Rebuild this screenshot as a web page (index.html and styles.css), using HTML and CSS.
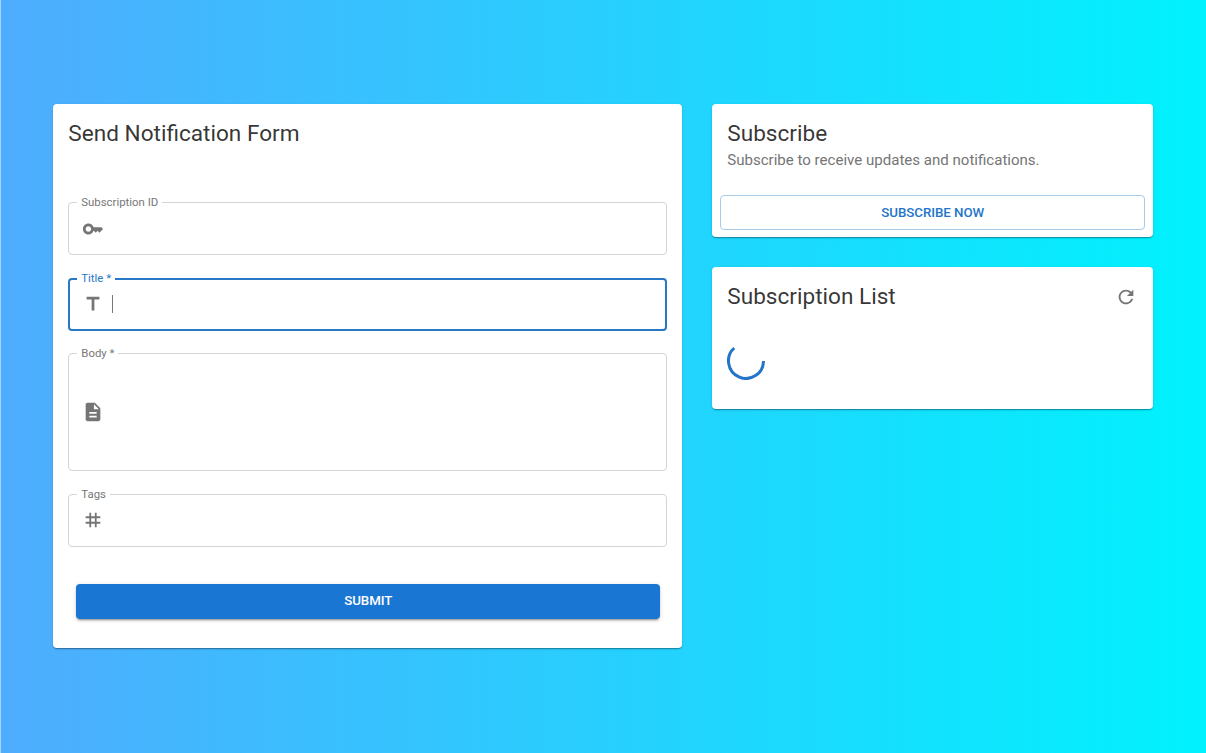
FILE: index.html
```html
<!DOCTYPE html>
<html lang="en">
<head>
<meta charset="utf-8">
<title>Notifications</title>
<link rel="stylesheet" href="styles.css">
</head>
<body>
<main class="layout">
  <section class="card form-card">
    <h1 class="card-title">Send Notification Form</h1>
    <form class="form">
      <div class="field">
        <label class="label">Subscription ID</label>
        <svg class="icon" viewBox="0 0 24 24"><path d="M21 10h-8.35C11.83 7.67 9.61 6 7 6c-3.31 0-6 2.69-6 6s2.69 6 6 6c2.61 0 4.83-1.67 5.65-4H13l2 2 2-2 2 2 4-4.04L21 10zM7 15c-1.65 0-3-1.35-3-3s1.35-3 3-3 3 1.35 3 3-1.35 3-3 3z"/></svg>
      </div>
      <div class="field focused">
        <label class="label">Title *</label>
        <svg class="icon" viewBox="0 0 24 24"><path d="M5 4v3h5.5v12h3V7H19V4z"/></svg>
        <span class="caret"></span>
      </div>
      <div class="field tall">
        <label class="label">Body *</label>
        <svg class="icon" viewBox="0 0 24 24"><path d="M14 2H6c-1.1 0-1.99.9-1.99 2L4 20c0 1.100.89 2 1.990 2H18c1.100 0 2-.9 2-2V8l-6-6zm2 16H8v-2h8v2zm0-4H8v-2h8v2zm-3-5V3.500L18.500 9H13z"/></svg>
      </div>
      <div class="field">
        <label class="label">Tags</label>
        <svg class="icon" viewBox="0 0 24 24"><path d="M20 10V8h-4V4h-2v4h-4V4H8v4H4v2h4v4H4v2h4v4h2v-4h4v4h2v-4h4v-2h-4v-4h4zm-6 4h-4v-4h4v4z"/></svg>
      </div>
      <button class="button submit" type="button">SUBMIT</button>
    </form>
  </section>
  <div class="side">
    <section class="card subscribe-card">
      <h2 class="card-title">Subscribe</h2>
      <p class="subtitle">Subscribe to receive updates and notifications.</p>
      <button class="button outlined" type="button">SUBSCRIBE NOW</button>
    </section>
    <section class="card list-card">
      <header class="list-header">
        <h2 class="card-title">Subscription List</h2>
        <svg class="icon refresh" viewBox="0 0 24 24"><path d="M17.650 6.350C16.200 4.900 14.210 4 12 4c-4.420 0-7.990 3.580-7.990 8s3.570 8 7.990 8c3.730 0 6.840-2.550 7.730-6h-2.080c-.82 2.330-3.040 4-5.650 4-3.310 0-6-2.690-6-6s2.690-6 6-6c1.660 0 3.140.69 4.220 1.780L13 11h7V4l-2.350 2.350z"/></svg>
      </header>
      <svg class="spinner" viewBox="0 0 38 38"><path d="M36.500 19A17.500 17.500 0 1 1 7.200 6"/></svg>
    </section>
  </div>
</main>
</body>
</html>
```
FILE: styles.css
```css
* { box-sizing: border-box; }
body {
  margin: 0;
  height: 753px;
  overflow: hidden;
  border-left: 1px solid #a9d5fb;
  background: linear-gradient(to right, #4facfe 0%, #00f2fe 100%);
  font-family: Roboto, sans-serif;
  color: rgba(0, 0, 0, 0.8);
}
.layout {
  display: grid;
  grid-template-columns: 629px 441px;
  gap: 30px;
  align-items: start;
  padding: 104.4px 0 0 52.3px;
}
.side { display: grid; gap: 30px; }
.card {
  background: #fff;
  border-radius: 4px;
  box-shadow: 0 2px 1px -1px rgba(0,0,0,.2), 0 1px 1px rgba(0,0,0,.14), 0 1px 3px rgba(0,0,0,.12);
}
.card-title {
  margin: 0;
  font-size: 22.6px;
  font-weight: 400;
  line-height: 30px;
}
.form-card { height: 544px; padding: 15px; }
.form { display: flex; flex-direction: column; gap: 22.4px; padding-top: 53px; }
.field {
  position: relative;
  display: flex;
  align-items: center;
  height: 53px;
  padding: 0 13px;
  border: 1px solid #d4d4d4;
  border-radius: 4px;
}
.focused { border: 2px solid #2878c6; padding: 0 12px; }
.tall { height: 118px; }
.label {
  position: absolute;
  top: -8px;
  left: 8px;
  padding: 0 4px;
  background: #fff;
  color: #777;
  font-size: 11.4px;
  line-height: 14px;
}
.focused .label { top: -9px; left: 7px; color: #2878c6; }
.icon { width: 22px; height: 22px; fill: #757575; }
.caret { width: 1px; height: 18px; margin-left: 8px; background: #777; }
.button {
  height: 35px;
  border-radius: 4px;
  font: 500 13.3px/22px Roboto, sans-serif;
  letter-spacing: -.05px;
}
.submit {
  margin: 14.6px 7px 0 8px;
  border: 0;
  background: #1976d2;
  color: #fff;
  box-shadow: 0 3px 1px -2px rgba(0,0,0,.2), 0 2px 2px rgba(0,0,0,.14), 0 1px 5px rgba(0,0,0,.12);
}
.subscribe-card { height: 133px; padding: 15px 8px 0; }
.subscribe-card .card-title, .subtitle { padding: 0 7px; }
.subtitle {
  margin: 0 0 24px;
  color: #757575;
  font-size: 15.05px;
  line-height: 22px;
}
.outlined {
  display: block;
  width: 100%;
  border: 1px solid #a7cbe6;
  background: #fff;
  color: #2475c8;
}
.list-card { height: 142px; padding: 15px; }
.list-header { display: flex; justify-content: space-between; align-items: center; }
.refresh { margin-right: 1px; }
.spinner {
  display: block;
  width: 38px;
  height: 38px;
  margin-top: 30px;
  fill: none;
  stroke: #2475c8;
  stroke-width: 3;
}
```
